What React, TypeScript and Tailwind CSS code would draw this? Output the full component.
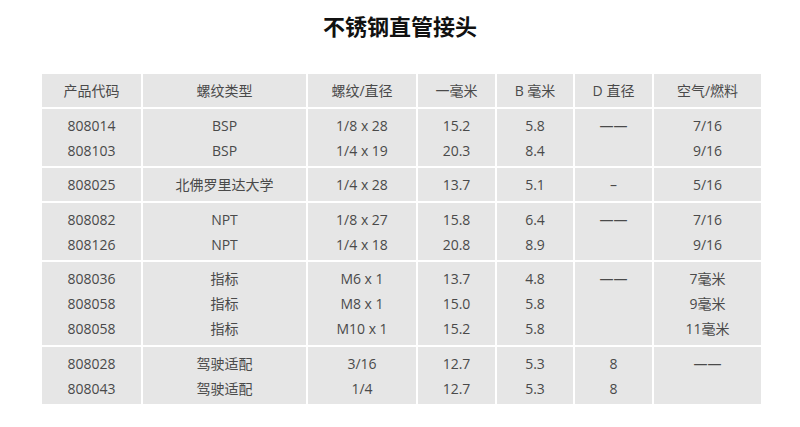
import React from "react";

type Group = string[][]; // columns, each with lines

const groups: Group[] = [
  [["808014", "808103"], ["BSP", "BSP"], ["1/8 x 28", "1/4 x 19"], ["15.2", "20.3"], ["5.8", "8.4"], ["——"], ["7/16", "9/16"]],
  [["808025"], ["北佛罗里达大学"], ["1/4 x 28"], ["13.7"], ["5.1"], ["–"], ["5/16"]],
  [["808082", "808126"], ["NPT", "NPT"], ["1/8 x 27", "1/4 x 18"], ["15.8", "20.8"], ["6.4", "8.9"], ["——"], ["7/16", "9/16"]],
  [
    ["808036", "808058", "808058"],
    ["指标", "指标", "指标"],
    ["M6 x 1", "M8 x 1", "M10 x 1"],
    ["13.7", "15.0", "15.2"],
    ["4.8", "5.8", "5.8"],
    ["——"],
    ["7毫米", "9毫米", "11毫米"],
  ],
  [["808028", "808043"], ["驾驶适配", "驾驶适配"], ["3/16", "1/4"], ["12.7", "12.7"], ["5.3", "5.3"], ["8", "8"], ["——"]],
];

const headers = ["产品代码", "螺纹类型", "螺纹/直径", "一毫米", "B 毫米", "D 直径", "空气/燃料"];
const widths = ["w-[101px]", "w-[165px]", "w-[110px]", "w-[79px]", "w-[78px]", "w-[79px]", "w-[109px]"];

export default function App() {
  return (
    <div
      className="w-[800px] h-[427px] bg-white overflow-hidden"
      style={{ fontFamily: '"Open Sans", "Noto Sans CJK SC", sans-serif' }}
    >
      <h1 className="text-center text-[22px] leading-[30px] font-bold text-[#111] pt-[11px] mb-[31px]">
        不锈钢直管接头
      </h1>
      <table className="ml-[40px] table-fixed border-collapse text-[14px] leading-[25px] text-[#4a4a4a]">
        <colgroup>
          {widths.map((w, i) => (
            <col key={i} className={w} />
          ))}
        </colgroup>
        <thead>
          <tr>
            {headers.map((h, i) => (
              <th
                key={i}
                className="bg-[#e6e6e6] border-2 border-white font-normal text-center align-top pt-[4px] pb-[3.5px]"
              >
                {h}
              </th>
            ))}
          </tr>
        </thead>
        <tbody>
          {groups.map((g, gi) => (
            <tr key={gi}>
              {g.map((lines, ci) => (
                <td
                  key={ci}
                  className="bg-[#e6e6e6] border-2 border-white text-center align-top pt-[4px] pb-[3.5px] whitespace-nowrap"
                >
                  {lines.map((l, li) => (
                    <div key={li}>{l}</div>
                  ))}
                </td>
              ))}
            </tr>
          ))}
        </tbody>
      </table>
    </div>
  );
}
